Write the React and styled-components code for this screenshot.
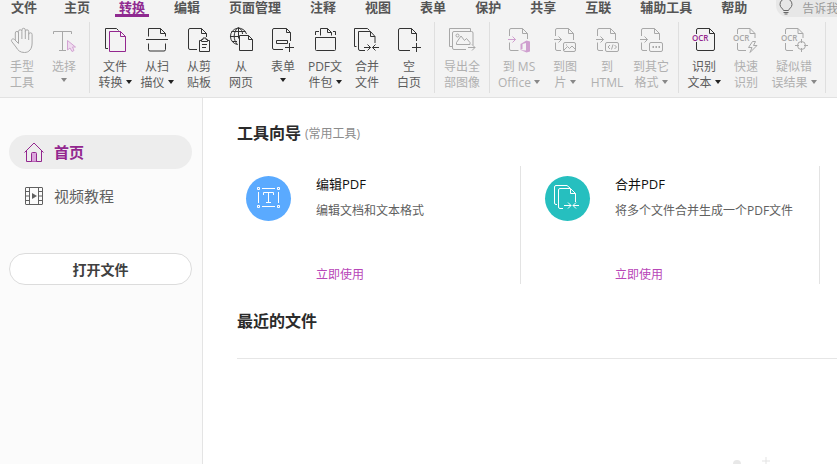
import { useState } from "react";
import styled, { createGlobalStyle } from "styled-components";

const GlobalStyle = createGlobalStyle`
  * {
    box-sizing: border-box;
  }
  body {
    margin: 0;
    overflow: hidden;
    font-family: "Open Sans", "Noto Sans CJK SC", sans-serif;
    font-size: 12px;
    background-color: #fff;
  }
  button,
  input {
    font-family: inherit;
    padding: 0;
    border: none;
    background: none;
  }
  h2,
  h3,
  p {
    margin: 0;
  }
`;

const Page = styled.div`
  height: 100vh;
  display: flex;
  flex-direction: column;
  overflow: hidden;
`;

const Ribbon = styled.header`
  flex: none;
  background-color: #f3f3f3;
  border-bottom: 1px solid #e2e2e2;
`;

const MenuBar = styled.nav`
  display: flex;
  height: 20px;
`;

const Tab = styled.button`
  flex: none;
  height: 17px;
  margin: ${(props) => (props.$first ? "0 9px 0 7px" : "0 11px 0 10px")};
  padding: 0 4px 2px;
  box-shadow: inset 0 -3px ${(props) => (props.$active ? "#8f2a90" : "transparent")};
  color: ${(props) => (props.$active ? "#8f2a90" : "#555")};
  font-family: "Liberation Sans", "Noto Sans CJK SC", sans-serif;
  font-size: 13px;
  font-weight: bold;
  line-height: 15px;
  white-space: nowrap;
  cursor: pointer;
`;

const SearchBox = styled.label`
  flex: 1 0 60px;
  min-width: 0;
  display: flex;
  align-items: center;
  gap: 8px;
  height: 17px;
  margin-left: 14px;
  padding-left: 2px;
  border-radius: 0 0 0 12px;
  background-color: #e7e7e7;
`;

const SearchInput = styled.input`
  flex: 1;
  min-width: 0;
  height: 16px;
  font-size: 12px;
  outline: none;
  &::placeholder {
    color: #999;
  }
`;

const Toolbar = styled.div`
  display: flex;
  height: 77px;
  padding-left: 1px;
`;

const Divider = styled.div`
  flex: none;
  width: 1px;
  height: 71px;
  margin: 2px 4px 0;
  background-color: #dfdfdf;
`;

const Tool = styled.button`
  flex: none;
  display: flex;
  flex-direction: column;
  align-items: center;
  width: ${(props) => props.$width || 42}px;
  padding-top: 6px;
  color: #333;
  cursor: pointer;
  &:disabled {
    color: #a8a8a8;
    cursor: default;
  }
`;

const ToolIcon = styled.svg`
  flex: none;
  width: 30px;
  height: 28px;
  margin-bottom: 5px;
  fill: none;
  stroke: currentColor;
`;

const ToolLabel = styled.span`
  display: flex;
  justify-content: center;
  align-items: center;
  gap: 3px;
  height: 16px;
  color: ${(props) => (props.$disabled ? "#b0b0b0" : "#5c5c5c")};
  font-size: 12px;
  line-height: 16px;
  white-space: nowrap;
`;

const Caret = styled.span`
  border: 3px solid transparent;
  border-top: 4px solid ${(props) => (props.$disabled ? "#888" : "#222")};
  border-bottom: none;
  margin-bottom: ${(props) => (props.$alone ? 6 : 2)}px;
`;

const OcrText = styled.text`
  fill: ${(props) => props.$color || "currentColor"};
  stroke: none;
  font-size: 8px;
  font-weight: 600;
`;

const Body = styled.div`
  flex: 1;
  display: flex;
  min-height: 0;
`;

const Sidebar = styled.aside`
  flex: none;
  width: 203px;
  padding: 37px 10px 0 9px;
  border-right: 1px solid #e4e4e4;
  background-color: #fbfbfb;
`;

const SideItem = styled.button`
  display: flex;
  align-items: center;
  gap: 9px;
  width: 100%;
  height: 34px;
  margin-bottom: 10px;
  padding: 0 0 2px 14px;
  border-radius: 17px;
  background-color: ${(props) => (props.$active ? "#ededed" : "transparent")};
  color: ${(props) => (props.$active ? "#93278f" : "#606060")};
  font-size: 15px;
  font-weight: ${(props) => (props.$active ? "bold" : "normal")};
  cursor: pointer;
`;

const OpenButton = styled.button`
  width: 100%;
  height: 32px;
  margin-top: 30px;
  border: 1px solid #dcdcdc;
  border-radius: 16px;
  background-color: #fff;
  color: #404040;
  font-size: 14px;
  font-weight: bold;
  cursor: pointer;
`;

const Main = styled.main`
  flex: 1;
  min-width: 0;
  display: flex;
  flex-direction: column;
  padding: 23px 0 0 19px;
  background-color: #fff;
`;

const Heading = styled.h2`
  display: flex;
  align-items: center;
  gap: 4px;
  height: 24px;
  margin-left: 15px;
  color: #2b2b2b;
  font-size: 16px;
  line-height: 24px;
`;

const Hint = styled.small`
  color: #8c8c8c;
  font-size: 12px;
  font-weight: normal;
  padding-top: 2px;
`;

const Cards = styled.div`
  display: flex;
  margin: 21px 0 25px;
`;

const Card = styled.section`
  flex: 0 0 299px;
  display: flex;
  gap: 25px;
  height: 118px;
  padding: 10px 0 0 24px;
  border-right: 1px solid #e3e3e3;
`;

const CardIcon = styled.svg`
  flex: none;
  width: 45px;
  height: 45px;
  border-radius: 50%;
  background-color: ${(props) => props.$color};
  fill: none;
  stroke: #fff;
`;

const CardText = styled.div`
  display: flex;
  flex-direction: column;
  align-items: flex-start;
  white-space: nowrap;
`;

const CardTitle = styled.h3`
  color: #111;
  font-size: 13px;
  font-weight: normal;
  line-height: 16px;
`;

const CardDesc = styled.p`
  margin-top: 10px;
  color: #606060;
  font-size: 12px;
  line-height: 18px;
`;

const CardLink = styled.a`
  margin-top: 46px;
  color: #b846b8;
  font-size: 12px;
  line-height: 18px;
  text-decoration: none;
`;

const Rule = styled.hr`
  width: 100%;
  margin: 25px 0 0 15px;
  border: none;
  border-top: 1px solid #e6e6e6;
`;

const Ornament = styled.svg`
  width: 50px;
  height: 20px;
  margin: 98px 60px 0 auto;
  flex: none;
`;

const purple = "#93278f";

const icons = {
  hand: (
    <path d="M11.5 15V5.5a1.7 1.7 0 0 1 3.4 0V13M14.9 5V4a1.7 1.7 0 0 1 3.4 0v9M18.3 5.5a1.7 1.7 0 0 1 3.4 0V14M21.7 8.5a1.7 1.7 0 0 1 3.4 0V17c0 6-3 9.5-7.600 9.500-4.500 0-6.500-2-8.500-5.500L4.700 15.500c-1-2 1.200-3.500 2.800-2l4 4V7a1.600 1.600 0 0 0-3.200 0v7" />
  ),
  select: (
    <>
      <path d="M4.500 8V5.500h18V8M13.500 5.500v19M10 24.500h7" />
      <path
        d="M18.500 14.500v9.500l2.500-2 2 3.500 2-1-1.500-3.500h3z"
        stroke="#d3a3d3"
        fill="#efdcef"
      />
    </>
  ),
  convert: (
    <>
      <path d="M8 22.500H5.500v-20h11l2 2" />
      <path d="M9.500 5.500h11l5 5v15h-16zM20.500 5.500v5h5" stroke={purple} />
    </>
  ),
  scan: (
    <path d="M6.500 10.500v-8h12l5 5v3M18.500 2.500v5h5M4 13.500h22M6.500 17.500v6q0 1.500 1.500 1.500h14q1.500 0 1.500-1.500v-6" />
  ),
  clipboard: (
    <>
      <path d="M13 23.500H6q-1.500 0-1.500-1.500V4q0-1.500 1.500-1.500h11.500l5 5V11M17.500 2.500v5h5" />
      <path d="M17.500 14.500h-2v11h10v-11h-2M17.500 15.500h6v-2h-1.500v-1.500h-3v1.500h-1.500zM18 18.500h5M18 21.500h4" />
    </>
  ),
  web: (
    <>
      <path d="M11.500 18.500A8.200 8.200 0 1 1 20.500 8M12 1.500C7 6 7 14 11.500 18.500M12.500 1.500c3 2 4 4 4 6.500M12.500 1.500v11M4 10.500h9M5.500 5.500h14M6 15.500h5" />
      <path d="M13.500 9.500h9l4 4v11h-13zM22.500 9.500v4h4" />
    </>
  ),
  form: (
    <path d="M15 23.500H6q-1.500 0-1.500-1.500V4q0-1.500 1.500-1.500h12.500l4 4V15M18.500 2.500v4h4M8.500 14.500h11v3h-11zM17 21.500h9M21.500 17v9" />
  ),
  folder: (
    <path d="M5.500 11.500h20v12q0 1-1 1h-18q-1 0-1-1zM5.500 9V5.500H9M10.500 9.500v-7h7l4 4v3M17.500 2.500v4h4M23 5.500h2.500V9" />
  ),
  merge: (
    <path d="M4.500 20.500h-2v-18h13l2 2M13 24.500H8q-1.500 0-1.500-1.500V5.500h12l4.500 5V17M18.500 5.500v5h4.500M12 21.500h6.500M15.500 18.500l3 3-3 3M27 21.500h-6.500M23.500 18.500l-3 3 3 3" />
  ),
  blank: (
    <path d="M16 24.500H6q-1.500 0-1.500-1.500V4q0-1.500 1.500-1.500h11.500l5 5V15M17.500 2.500v5h5M18 21.500h9M22.500 17v9" />
  ),
  exportAll: (
    <>
      <path d="M5 20.500H2.500v-18h21V5M19 23.500H7q-1.500 0-1.500-1.500V7q0-1.500 1.500-1.500h17.500q1.500 0 1.500 1.500v12M21 21.500h7M25 18.500l3 3-3 3" />
      <path d="M9.500 18.500h13.500v-2l-3.500-4-2 2-3.500-4.500-4.500 6.500z" />
      <circle cx="10.500" cy="9.500" r="1.500" />
    </>
  ),
  toOffice: (
    <>
      <path d="M5.500 10V4q0-1.500 1.500-1.500h11.500l5 5V13M18.500 2.500v5h5M5.500 16.500V23q0 1.500 1.500 1.500h7.500" />
      <path d="M4 13.500h7.500M8.500 10.500l3 3-3 3" stroke="#cf9fcf" />
      <path
        d="M16.500 18l6-3.500 3.500 1v10l-3.500 1-6-2.500 5.500.5v-7.500l-3.500 1v5l-2 1z"
        fill="#cf9fcf"
        stroke="none"
      />
    </>
  ),
  toImage: (
    <>
      <path d="M5.500 10V4q0-1.500 1.500-1.500h11.500l5 5V14M18.500 2.500v5h5M5.500 16.500V23q0 1.500 1.500 1.500h4M4 13.500h7.500M8.500 10.500l3 3-3 3" />
      <path d="M15 16.500h9q1.500 0 1.500 1.500v6q0 1.500-1.500 1.500h-9q-1.500 0-1.500-1.500v-6q0-1.500 1.500-1.500zM14 24l3.500-3.500 2 2 2.500-2.500 3 3M16 19h1" />
    </>
  ),
  toHtml: (
    <>
      <path d="M5.500 10V4q0-1.500 1.500-1.500h11.500l5 5V14M18.500 2.500v5h5M5.500 16.500V23q0 1.500 1.500 1.500h4M4 13.500h7.500M8.500 10.500l3 3-3 3" />
      <path d="M15 16.500h10q1.500 0 1.500 1.500v6q0 1.500-1.500 1.500H15q-1.500 0-1.500-1.500v-6q0-1.500 1.500-1.500zM18 19l-2 2 2 2M22.500 19l2 2-2 2M21 18.500l-1.500 5" />
    </>
  ),
  toOther: (
    <>
      <path d="M5.500 10V4q0-1.500 1.500-1.500h11.500l5 5V14M18.500 2.500v5h5M5.500 16.500V23q0 1.500 1.500 1.500h4M4 13.500h7.500M8.500 10.500l3 3-3 3" />
      <path d="M15 16.500h10q1.500 0 1.500 1.500v6q0 1.500-1.500 1.500H15q-1.500 0-1.500-1.500v-6q0-1.500 1.500-1.500z" />
      <path d="M16.500 21h1.500M19.500 21h1.500M22.500 21h1.500" strokeWidth="2" />
    </>
  ),
  ocr: (
    <>
      <path d="M7.500 8V4q0-1.500 1.500-1.500h11.500l5 5V23q0 1.500-1.500 1.500H9q-1.500 0-1.500-1.500v-7M20.500 2.500v5h5" />
      <OcrText x="3" y="15" $color={purple}>
        OCR
      </OcrText>
    </>
  ),
  ocrFast: (
    <>
      <path d="M6.500 8V4q0-1.500 1.500-1.500h11l5 5V12M19 2.500v5h5M6.500 17v6q0 1.500 1.500 1.500h7" />
      <path d="M21.500 15.500l-4 6h3.500l-2 5 7-7h-3.500l2-4z" />
      <OcrText x="2" y="15">
        OCR
      </OcrText>
    </>
  ),
  ocrSuspect: (
    <>
      <path d="M6.500 8V4q0-1.500 1.500-1.500h11l5 5V12M19 2.500v5h5M6.500 17v6q0 1.500 1.500 1.500h6" />
      <circle cx="22.500" cy="19.500" r="4" />
      <path d="M22.500 13v4M22.500 22v4M16 19.500h4M25 19.500h4" />
      <OcrText x="2" y="15">
        OCR
      </OcrText>
    </>
  ),
};

const tabs = [
  "文件",
  "主页",
  "转换",
  "编辑",
  "页面管理",
  "注释",
  "视图",
  "表单",
  "保护",
  "共享",
  "互联",
  "辅助工具",
  "帮助",
];

const groups = [
  [
    { icon: "hand", lines: ["手型", "工具"], disabled: true },
    { icon: "select", lines: ["选择", ""], caret: true, disabled: true },
  ],
  [
    { icon: "convert", lines: ["文件", "转换"], caret: true },
    { icon: "scan", lines: ["从扫", "描仪"], caret: true },
    { icon: "clipboard", lines: ["从剪", "贴板"] },
    { icon: "web", lines: ["从", "网页"] },
    { icon: "form", lines: ["表单", ""], caret: true },
    { icon: "folder", lines: ["PDF文", "件包"], caret: true },
    { icon: "merge", lines: ["合并", "文件"] },
    { icon: "blank", lines: ["空", "白页"] },
  ],
  [{ icon: "exportAll", lines: ["导出全", "部图像"], width: 46, disabled: true }],
  [
    { icon: "toOffice", lines: ["到 MS", "Office"], width: 50, caret: true, disabled: true },
    { icon: "toImage", lines: ["到图", "片"], caret: true, disabled: true },
    { icon: "toHtml", lines: ["到", "HTML"], disabled: true },
    { icon: "toOther", lines: ["到其它", "格式"], width: 46, caret: true, disabled: true },
  ],
  [
    { icon: "ocr", lines: ["识别", "文本"], caret: true },
    { icon: "ocrFast", lines: ["快速", "识别"], disabled: true },
    { icon: "ocrSuspect", lines: ["疑似错", "误结果"], width: 54, caret: true, disabled: true },
  ],
];

const ToolButton = ({ icon, lines, width, caret, disabled }) => (
  <Tool $width={width} disabled={disabled}>
    <ToolIcon viewBox="0 0 30 28">{icons[icon]}</ToolIcon>
    <ToolLabel $disabled={disabled}>{lines[0]}</ToolLabel>
    <ToolLabel $disabled={disabled}>
      {lines[1] && <span>{lines[1]}</span>}
      {caret && <Caret $disabled={disabled} $alone={!lines[1]} />}
    </ToolLabel>
  </Tool>
);

const App = () => {
  const [activeTab, setActiveTab] = useState("转换");
  const [page, setPage] = useState("home");

  return (
    <Page>
      <GlobalStyle />
      <Ribbon>
        <MenuBar>
          {tabs.map((tab, i) => (
            <Tab
              key={tab}
              $first={i === 0}
              $active={tab === activeTab}
              onClick={() => setActiveTab(tab)}
            >
              {tab}
            </Tab>
          ))}
          <SearchBox>
            <svg width="16" height="17" viewBox="0 0 16 17" fill="none" stroke="#666">
              <path d="M5.500 10.500C5 8.500 2 7.500 2 4.500a6 6 0 0 1 12 0c0 3-3 4-3.500 6z" />
              <path d="M5.500 12.500h5M6.500 14h3" />
            </svg>
            <SearchInput placeholder="告诉我" aria-label="告诉我" />
          </SearchBox>
        </MenuBar>
        <Toolbar>
          {groups.map((group) => [
            ...group.map((tool) => <ToolButton key={tool.icon} {...tool} />),
            <Divider key={group[0].icon + "-divider"} />,
          ])}
        </Toolbar>
      </Ribbon>
      <Body>
        <Sidebar>
          <SideItem $active={page === "home"} onClick={() => setPage("home")}>
            <svg width="22" height="22" viewBox="0 0 22 22" fill="none" stroke="currentColor">
              <path d="M1.500 12.500L11 3l9.500 9.500M3.500 10.500v11h15v-11" />
              <path d="M8.500 21.500v-8q0-1 1-1h3q1 0 1 1v8" fill="#dba6dc" />
            </svg>
            首页
          </SideItem>
          <SideItem $active={page === "video"} onClick={() => setPage("video")}>
            <svg width="22" height="22" viewBox="0 0 22 22" fill="none" stroke="currentColor">
              <path d="M3 3.500h16q.5 0 .5.500v16q0 .5-.5.500H3q-.5 0-.5-.500V4q0-.500.500-.500zM6.500 3.500v17M15.500 3.500v17M2.500 7.500h4M2.500 12h4M2.500 16.500h4M15.500 7.500h4M15.500 12h4M15.500 16.500h4" />
              <path d="M9 9l5 3-5 3z" fill="currentColor" stroke="none" />
            </svg>
            视频教程
          </SideItem>
          <OpenButton>打开文件</OpenButton>
        </Sidebar>
        <Main>
          <Heading>
            工具向导 <Hint>(常用工具)</Hint>
          </Heading>
          <Cards>
            <Card>
              <CardIcon viewBox="0 0 45 45" $color="#5aaaff">
                <path d="M11.500 11.500h2v2h-2zM31.500 11.500h2v2h-2zM11.500 29.500h2v2h-2zM31.500 29.500h2v2h-2zM16 12.500h13M16 30.500h13M12.500 16v11M32.500 16v11M17.500 19v-2.500h10V19M22.500 16.500v10M20 26.500h5" />
              </CardIcon>
              <CardText>
                <CardTitle>编辑PDF</CardTitle>
                <CardDesc>编辑文档和文本格式</CardDesc>
                <CardLink href="#edit">立即使用</CardLink>
              </CardText>
            </Card>
            <Card>
              <CardIcon viewBox="0 0 45 45" $color="#26bfbf">
                <path d="M12 28.500h-1q-1.500 0-1.500-1.500V11q0-1.500 1.500-1.500h11l3 2.500M18 32.500h-3q-1.500 0-1.500-1.500V14q0-1.500 1.500-1.500h10.500l5 5V26M25.500 12.500v5h5M19 29.500h7M23 26.500l3 3-3 3M34 29.500h-6M31 26.500l-3 3 3 3" />
              </CardIcon>
              <CardText>
                <CardTitle>合并PDF</CardTitle>
                <CardDesc>将多个文件合并生成一个PDF文件</CardDesc>
                <CardLink href="#merge">立即使用</CardLink>
              </CardText>
            </Card>
          </Cards>
          <Heading>最近的文件</Heading>
          <Rule />
          <Ornament viewBox="0 0 50 20">
            <circle cx="10" cy="7" r="4" fill="#e8e8e8" />
            <path d="M39 0v8M35 4h8" stroke="#e3e3e3" />
          </Ornament>
        </Main>
      </Body>
    </Page>
  );
};

export default App;
